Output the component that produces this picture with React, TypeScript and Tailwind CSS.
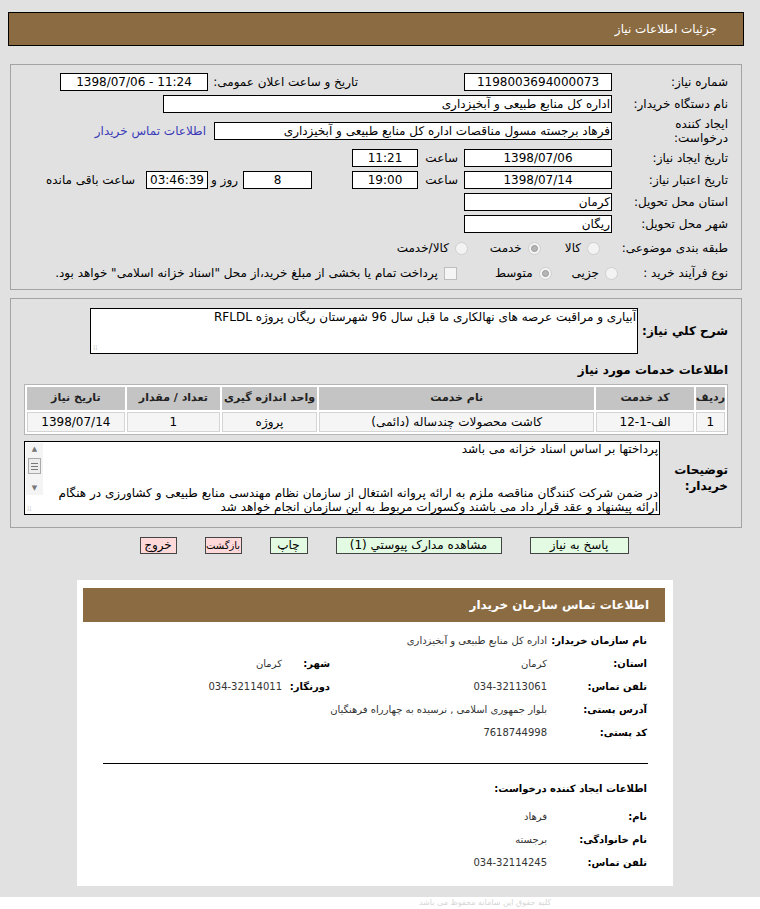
const Box = ({ w, children, center = true, className = "" }: { w: string; children?: React.ReactNode; center?: boolean; className?: string }) => (
  <div
    className={`${w} h-[18px] shrink-0 border border-black bg-white leading-[16px] whitespace-nowrap overflow-hidden ${center ? "text-center" : "text-right pr-[1px]"} ${className}`}
  >
    {children}
  </div>
);

const Radio = ({ checked = false }: { checked?: boolean }) => (
  <span className="w-[13px] h-[13px] shrink-0 rounded-full border border-[#cfcfcf] bg-[#f3f3f3] flex items-center justify-center">
    {checked && <span className="w-[7px] h-[7px] rounded-full border border-[#9a9a9a] bg-[#b5b5b5]" />}
  </span>
);

const Label = ({ children }: { children: React.ReactNode }) => (
  <div className="w-[116px] shrink-0 leading-[14px]">{children}</div>
);

const InfoRow = ({ label, value, label2, value2 }: { label: string; value: string; label2?: string; value2?: string }) => (
  <div className="flex items-center h-[23px] whitespace-nowrap">
    <div className="w-[100px] shrink-0 font-bold text-[10px] text-black">{label}</div>
    <div className="w-[217px] shrink-0 text-[10px] text-[#333]">{value}</div>
    {label2 && <div className="w-[48px] shrink-0 font-bold text-[10px] text-black">{label2}</div>}
    {value2 && <div className="text-[10px] text-[#333]">{value2}</div>}
  </div>
);

export default function App() {
  return (
    <div dir="rtl" className="min-h-screen bg-[#e1e1e1] font-['DejaVu_Sans',sans-serif] text-[12px] text-black pt-[12px]">
      {/* title bar */}
      <div className="ml-[8px] mr-[16px] h-[34px] bg-[#8b6b41] border border-black flex items-center pr-[26px] text-white text-[12px]">
        جزئیات اطلاعات نیاز
      </div>

      {/* main info panel */}
      <div className="ml-[10px] mr-[18px] mt-[18px] border border-[#a3a3a3] pr-[13px] pt-[6px] pb-[4px]">
        <div className="flex items-center h-[22px]">
          <Label>شماره نیاز:</Label>
          <Box w="w-[148px]">1198003694000073</Box>
          <div className="mr-[106px] w-[150px] shrink-0">تاریخ و ساعت اعلان عمومی:</div>
          <Box w="w-[148px]">
            <span dir="ltr">1398/07/06 - 11:24</span>
          </Box>
        </div>
        <div className="flex items-center h-[22px]">
          <Label>نام دستگاه خریدار:</Label>
          <Box w="w-[449px]" center={false}>اداره کل منابع طبیعی و آبخیزداری</Box>
        </div>
        <div className="flex items-center h-[32px]">
          <Label>
            ایجاد کننده
            <br />
            درخواست:
          </Label>
          <Box w="w-[398px]" center={false}>فرهاد برجسته مسول مناقصات اداره کل منابع طبیعی و آبخیزداری</Box>
          <a href="#" className="mr-[8px] text-[#3b3bb8]">اطلاعات تماس خریدار</a>
        </div>
        <div className="flex items-center h-[22px]">
          <Label>تاریخ ایجاد نیاز:</Label>
          <Box w="w-[148px]">1398/07/06</Box>
          <div className="w-[46px] shrink-0 pr-[6px]">ساعت</div>
          <Box w="w-[66px]">11:21</Box>
        </div>
        <div className="flex items-center h-[22px]">
          <Label>تاریخ اعتبار نیاز:</Label>
          <Box w="w-[148px]">1398/07/14</Box>
          <div className="w-[46px] shrink-0 pr-[6px]">ساعت</div>
          <Box w="w-[66px]">19:00</Box>
          <Box w="w-[69px]" className="mr-[40px]">8</Box>
          <div className="w-[35px] shrink-0 pr-[5px]">روز و</div>
          <Box w="w-[62px]" className="bg-[#eeeec4] border-[#8a8a6a]">03:46:39</Box>
          <div className="mr-[11px]">ساعت باقی مانده</div>
        </div>
        <div className="flex items-center h-[22px]">
          <Label>استان محل تحویل:</Label>
          <Box w="w-[148px]" center={false}>کرمان</Box>
        </div>
        <div className="flex items-center h-[22px]">
          <Label>شهر محل تحویل:</Label>
          <Box w="w-[148px]" center={false}>ریگان</Box>
        </div>
        <div className="flex items-center h-[26px]">
          <Label>طبقه بندی موضوعی:</Label>
          <div className="flex items-center gap-[6px] mr-[12px]">
            <Radio />
            <span>کالا</span>
          </div>
          <div className="flex items-center gap-[6px] mr-[24px]">
            <Radio checked />
            <span>خدمت</span>
          </div>
          <div className="flex items-center gap-[6px] mr-[22px]">
            <Radio />
            <span>کالا/خدمت</span>
          </div>
        </div>
        <div className="flex items-center h-[24px]">
          <div className="w-[110px] shrink-0">نوع فرآیند خرید :</div>
          <div className="flex items-center gap-[6px]">
            <Radio />
            <span>جزیی</span>
          </div>
          <div className="flex items-center gap-[6px] mr-[20px]">
            <Radio checked />
            <span>متوسط</span>
          </div>
          <div className="flex items-center gap-[6px] mr-[38px]">
            <span className="w-[13px] h-[13px] border border-[#bdbdbd] bg-[#f5f5f5]" />
            <span className="whitespace-nowrap">پرداخت تمام یا بخشی از مبلغ خرید،از محل "اسناد خزانه اسلامی" خواهد بود.</span>
          </div>
        </div>
      </div>

      {/* description + services panel */}
      <div className="ml-[10px] mr-[18px] mt-[8px] border border-[#a3a3a3] pr-[13px] pl-[13px] pt-[9px] pb-[12px]">
        <div className="flex items-center">
          <div className="w-[90px] shrink-0 font-bold">شرح كلي نياز:</div>
          <div className="relative w-[548px] h-[46px] border border-black bg-white pr-[1px] leading-[16px]">
            آبیاری و مراقبت عرصه های نهالکاری ما قبل سال 96 شهرستان ریگان پروژه RFLDL
            <span className="absolute left-[2px] bottom-[1px] text-[7px] text-[#bbb] leading-none">⁞⁞</span>
          </div>
        </div>

        <div className="mt-[8px] font-bold h-[16px] leading-[16px]">اطلاعات خدمات مورد نیاز</div>

        <table className="mt-[6px] w-[704px] border border-[#b5b5b5] border-separate border-spacing-[2px] bg-white">
          <thead>
            <tr className="h-[23px] text-[11px] font-bold text-[#222]">
              <th className="w-[26px] bg-[#c4c4c4] font-bold">ردیف</th>
              <th className="w-[98px] bg-[#c4c4c4] font-bold">کد خدمت</th>
              <th className="w-[278px] bg-[#c4c4c4] font-bold">نام خدمت</th>
              <th className="w-[96px] bg-[#c4c4c4] font-bold">واحد اندازه گیری</th>
              <th className="w-[94px] bg-[#c4c4c4] font-bold">تعداد / مقدار</th>
              <th className="w-[98px] bg-[#c4c4c4] font-bold">تاریخ نیاز</th>
            </tr>
          </thead>
          <tbody>
            <tr className="h-[20px] text-center">
              <td className="bg-[#f5f5f5] border border-[#d4d4d4]">1</td>
              <td className="bg-[#f5f5f5] border border-[#d4d4d4]">الف-1-12</td>
              <td className="bg-[#f5f5f5] border border-[#d4d4d4]">کاشت محصولات چندساله (دائمی)</td>
              <td className="bg-[#f5f5f5] border border-[#d4d4d4]">پروژه</td>
              <td className="bg-[#f5f5f5] border border-[#d4d4d4]">1</td>
              <td className="bg-[#f5f5f5] border border-[#d4d4d4]">1398/07/14</td>
            </tr>
          </tbody>
        </table>

        <div className="flex items-center mt-[6px]">
          <div className="w-[68px] shrink-0 font-bold leading-[16px]">
            توضیحات
            <br />
            خریدار:
          </div>
          <div className="relative w-[636px] h-[74px] border border-black bg-white flex">
            <div className="flex-1 pr-[1px] leading-[14.5px] overflow-hidden">
              <div>پرداختها بر اساس اسناد خزانه می باشد</div>
              <div>&nbsp;</div>
              <div>&nbsp;</div>
              <div>در ضمن شرکت کنندگان مناقصه ملزم به ارائه پروانه اشتغال از سازمان نظام مهندسی منابع طبیعی و کشاورزی در هنگام</div>
              <div>ارائه پیشنهاد و عقد قرار داد می باشند وکسورات مربوط به این سازمان انجام خواهد شد</div>
            </div>
            <div className="w-[17px] shrink-0 ml-[1px] mt-[1px] h-[52px] bg-[#f4f4f4] flex flex-col items-center">
              <div className="h-[13px] flex items-center justify-center text-[7px] text-[#777]">▲</div>
              <div className="w-[13px] h-[16px] mt-[2px] border border-[#aaa] bg-[#ececec] flex flex-col items-center justify-center gap-[2px]">
                <span className="w-[7px] h-px bg-[#777]" />
                <span className="w-[7px] h-px bg-[#777]" />
                <span className="w-[7px] h-px bg-[#777]" />
              </div>
              <div className="flex-1" />
              <div className="h-[13px] flex items-center justify-center text-[7px] text-[#777]">▼</div>
            </div>
            <span className="absolute left-[2px] bottom-[1px] text-[7px] text-[#bbb] leading-none">⁞⁞</span>
          </div>
        </div>
      </div>

      {/* action buttons */}
      <div className="mt-[9px] flex justify-center gap-[28px] pl-[8px]">
        <button className="w-[99px] h-[17px] border border-[#444] bg-[#e2fbe2] text-[12px] leading-[15px]">پاسخ به نیاز</button>
        <button className="w-[166px] h-[17px] border border-[#444] bg-[#e2fbe2] text-[12px] leading-[15px]">مشاهده مدارک پیوستي (1)</button>
        <button className="w-[38px] h-[17px] border border-[#444] bg-[#e2fbe2] text-[12px] leading-[15px]">چاپ</button>
        <button className="w-[37px] h-[17px] border border-[#444] bg-[#ffd9d9] text-[10px] leading-[15px] whitespace-nowrap px-0">بازگشت</button>
        <button className="w-[37px] h-[17px] border border-[#444] bg-[#ffd9d9] text-[12px] leading-[15px]">خروج</button>
      </div>

      {/* buyer contact card */}
      <div className="mt-[26px] mr-[87px] w-[596px] bg-white pt-[8px] pl-[6px] pr-[8px] pb-[12px]">
        <div className="h-[34px] bg-[#8b6b41] flex items-center pr-[16px] text-white font-bold text-[12px]">
          اطلاعات تماس سازمان خریدار
        </div>
        <div className="pr-[18px] mt-[7px]">
          <InfoRow label="نام سازمان خریدار:" value="اداره کل منابع طبیعی و آبخیزداری" />
          <InfoRow label="استان:" value="کرمان" label2="شهر:" value2="کرمان" />
          <InfoRow label="تلفن تماس:" value="034-32113061" label2="دورنگار:" value2="034-32114011" />
          <InfoRow label="آدرس پستی:" value="بلوار جمهوری اسلامی , نرسیده به چهارراه فرهنگیان" />
          <InfoRow label="کد پستی:" value="7618744998" />
        </div>
        <div className="mt-[19px] mr-[17px] ml-[20px] h-px bg-black" />
        <div className="pr-[18px] mt-[17px] font-bold text-[10px] h-[16px] leading-[16px]">اطلاعات ایجاد کننده درخواست:</div>
        <div className="pr-[18px] mt-[8px]">
          <InfoRow label="نام:" value="فرهاد" />
          <InfoRow label="نام خانوادگی:" value="برجسته" />
          <InfoRow label="تلفن تماس:" value="034-32114245" />
        </div>
      </div>

      <div className="mt-[11px] h-[12px] bg-white text-[8px] text-[#d6d6d6] text-center leading-[12px] pl-[210px]">
        کلیه حقوق این سامانه محفوظ می باشد
      </div>
    </div>
  );
}
